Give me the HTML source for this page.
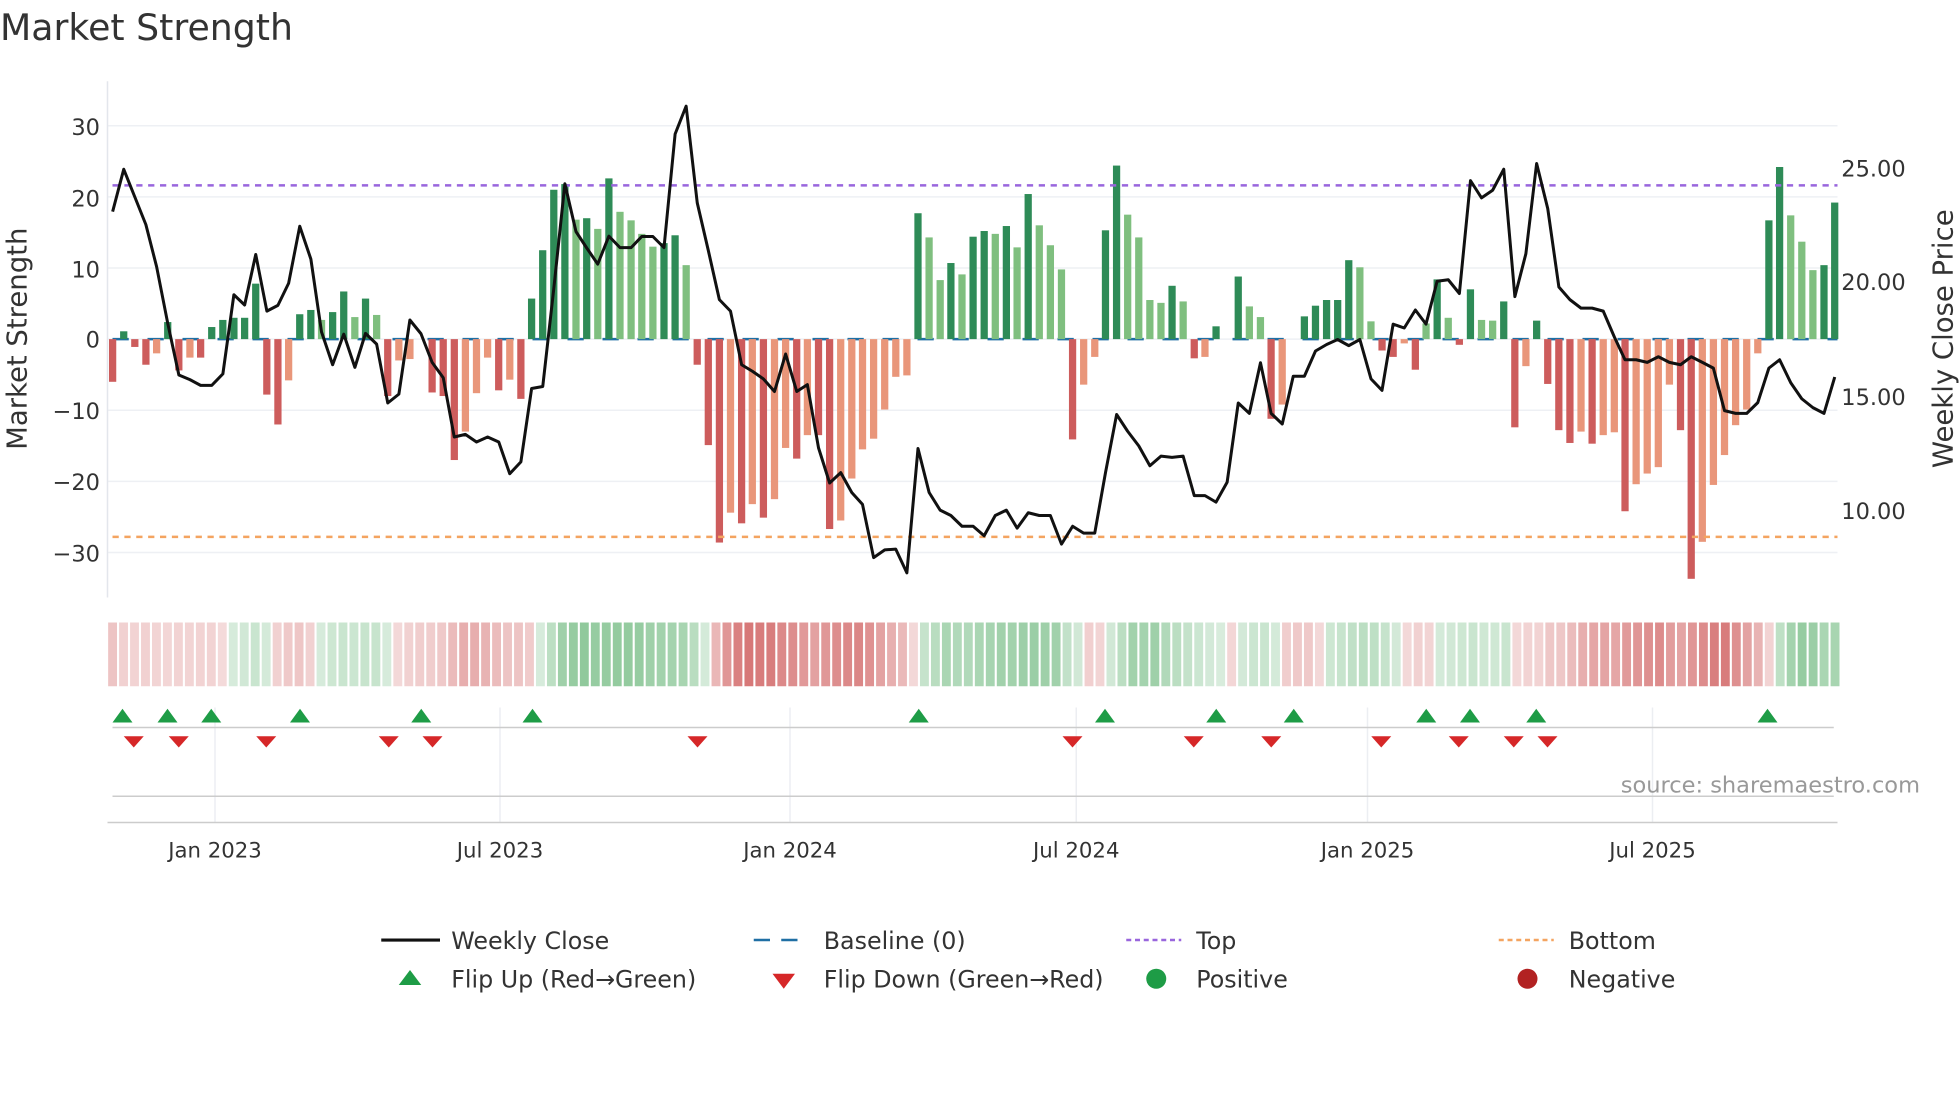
<!DOCTYPE html>
<html><head><meta charset="utf-8">
<style>
html,body{margin:0;padding:0;background:#fff;}
svg{display:block;font-family:"DejaVu Sans","Liberation Sans",sans-serif;}
</style></head>
<body>
<svg id="s" width="1960" height="1102" viewBox="0 0 1568 881.6" xmlns="http://www.w3.org/2000/svg">
<rect width="1568" height="882" fill="#fff"/>
<text x="0" y="32" font-size="29" fill="#333">Market Strength</text>
<g id="grid"></g>
<g id="bars"></g>
<g id="fg"></g>
<text transform="translate(21,271) rotate(-90)" text-anchor="middle" font-size="22" fill="#333">Market Strength</text>
<text transform="translate(1562,271) rotate(-90)" text-anchor="middle" font-size="22" fill="#333">Weekly Close Price</text>
<g font-size="18" fill="#333" text-anchor="end">
<text x="80" y="108">30</text><text x="80" y="165">20</text><text x="80" y="222">10</text><text x="80" y="278">0</text>
<text x="80" y="335">−10</text><text x="80" y="392">−20</text><text x="80" y="449">−30</text>
</g>
<g font-size="18" fill="#333">
<text x="1473" y="141">25.00</text><text x="1473" y="232">20.00</text><text x="1473" y="324">15.00</text><text x="1473" y="415">10.00</text>
</g>
<g font-size="17" fill="#333" text-anchor="middle">
<text x="172" y="686">Jan 2023</text><text x="400" y="686">Jul 2023</text><text x="632" y="686">Jan 2024</text>
<text x="861" y="686">Jul 2024</text><text x="1094" y="686">Jan 2025</text><text x="1322" y="686">Jul 2025</text>
</g>
<text x="1536" y="634" font-size="18" fill="#999" text-anchor="end">source: sharemaestro.com</text>
<g font-size="19" fill="#333">
<line x1="305" y1="752" x2="352" y2="752" stroke="#111" stroke-width="2.5"/>
<text x="361" y="759">Weekly Close</text>
<line x1="603" y1="752" x2="645" y2="752" stroke="#1f6fa4" stroke-width="2" stroke-dasharray="13,9"/>
<text x="659" y="759">Baseline (0)</text>
<line x1="901" y1="752" x2="945" y2="752" stroke="#9966dd" stroke-width="2" stroke-dasharray="4,3"/>
<text x="957" y="759">Top</text>
<line x1="1199" y1="752" x2="1243" y2="752" stroke="#f4a460" stroke-width="2" stroke-dasharray="4,3"/>
<text x="1255" y="759">Bottom</text>
<polygon points="319,788 337,788 328,776" fill="#1e9c46"/>
<text x="361" y="790">Flip Up (Red→Green)</text>
<polygon points="618,779 636,779 627,791" fill="#d62728"/>
<text x="659" y="790">Flip Down (Green→Red)</text>
<circle cx="925" cy="783" r="8" fill="#1e9c46"/>
<text x="957" y="790">Positive</text>
<circle cx="1222" cy="783" r="8" fill="#b22222"/>
<text x="1255" y="790">Negative</text>
</g>
</svg>
<script>
(function(){
var NS="http://www.w3.org/2000/svg";
function el(p,t,a){var e=document.createElementNS(NS,t);for(var k in a)e.setAttribute(k,a[k]);p.appendChild(e);return e;}
var grid=document.getElementById('grid'),bars=document.getElementById('bars'),fg=document.getElementById('fg');
[30,20,10,0,-10,-20,-30].forEach(function(v){var y=271.3-v*5.69;el(grid,'line',{x1:86,x2:1470,y1:y,y2:y,stroke:'#eef0f4','stroke-width':1.2});});
el(grid,'line',{x1:86,x2:86,y1:65,y2:478,stroke:'#e3e6ec','stroke-width':1.2});
[172,400,632,861,1094,1322].forEach(function(x){el(grid,'line',{x1:x,x2:x,y1:566,y2:658,stroke:'#eceef2','stroke-width':1.2});});
el(grid,'line',{x1:90,x2:1467,y1:582,y2:582,stroke:'#ccc','stroke-width':1.2});
el(grid,'line',{x1:90,x2:1467,y1:637,y2:637,stroke:'#ccc','stroke-width':1.2});
el(grid,'line',{x1:86,x2:1470,y1:658,y2:658,stroke:'#ccc','stroke-width':1.2});
var C={G:'#2e8b57',g:'#7fbf7f',R:'#cd5c5c',s:'#e9967a'};
var z1=[[33,-6,'R'],[62,1.1,'G'],[91,-1.1,'R'],[120,-3.6,'R'],[148,-2,'s'],[177,2.4,'G'],[206,-4.4,'R'],[235,-2.6,'s'],[263,-2.6,'R'],[292,1.7,'G'],[321,2.7,'G'],[350,3,'G'],[378,3,'G'],[407,7.8,'G'],[436,-7.8,'R'],[465,-12,'R'],[493,-5.8,'s'],[522,3.5,'G'],[551,4.1,'G'],[579,2.7,'g'],[608,3.8,'G'],[637,6.7,'G'],[666,3.1,'g'],[694,5.7,'G'],[723,3.4,'g'],[752,-8,'R'],[781,-3,'s'],[810,-2.8,'s'],[868,-7.5,'R'],[897,-8,'R'],[926,-17,'R'],[955,-13,'s'],[984,-7.6,'s'],[1013,-2.6,'s'],[1042,-7.2,'R'],[1071,-5.7,'s'],[1100,-8.4,'R'],[1128,5.7,'G'],[1157,12.5,'G'],[1186,21,'G'],[1215,21.8,'G'],[1244,16.8,'g'],[1272,17,'G'],[1301,15.5,'g'],[1330,22.6,'G'],[1359,17.9,'g'],[1388,16.7,'g'],[1416,14.8,'g'],[1445,13,'g'],[1474,13.5,'G'],[1503,14.6,'G'],[1532,10.4,'g']];
var z2=[[45,-3.6,'R'],[74,-14.9,'R'],[103,-28.6,'R'],[132,-24.4,'s'],[161,-25.9,'R'],[189,-23.2,'s'],[218,-25.1,'R'],[247,-22.5,'s'],[276,-15.3,'s'],[305,-16.8,'R'],[333,-13.5,'s'],[362,-13.5,'R'],[391,-26.7,'R'],[420,-25.5,'s'],[449,-19.6,'s'],[477,-15.5,'s'],[506,-14,'s'],[535,-9.9,'s'],[564,-5.3,'s'],[593,-5.1,'s'],[622,17.7,'G'],[651,14.3,'g'],[680,8.3,'g'],[708,10.7,'G'],[737,9.1,'g'],[766,14.4,'G'],[795,15.2,'G'],[824,14.8,'g'],[853,15.9,'G'],[881,12.9,'g'],[910,20.4,'G'],[939,16,'g'],[968,13.2,'g'],[997,9.8,'g'],[1026,-14.1,'R'],[1055,-6.4,'s'],[1084,-2.5,'s'],[1112,15.3,'G'],[1141,24.4,'G'],[1170,17.5,'g'],[1199,14.3,'g'],[1228,5.5,'g'],[1257,5.1,'g'],[1286,7.5,'G'],[1315,5.3,'g'],[1344,-2.7,'R'],[1372,-2.5,'s'],[1401,1.8,'G'],[1459,8.8,'G'],[1488,4.6,'g'],[1517,3.1,'g']];
var z3=[[29,-11.2,'R'],[58,-9.2,'s'],[116,3.2,'G'],[145,4.7,'G'],[174,5.5,'G'],[203,5.5,'G'],[232,11.1,'G'],[261,10.1,'g'],[290,2.5,'g'],[319,-1.6,'R'],[348,-2.5,'R'],[377,-0.6,'s'],[406,-4.3,'R'],[434,2.2,'g'],[463,8.4,'G'],[492,3,'g'],[521,-0.8,'R'],[550,7,'G'],[579,2.7,'g'],[608,2.6,'g'],[637,5.3,'G'],[666,-12.4,'R'],[695,-3.8,'s'],[723,2.6,'G'],[752,-6.3,'R'],[781,-12.8,'R'],[810,-14.6,'R'],[839,-13,'s'],[868,-14.7,'R'],[897,-13.5,'s'],[926,-13.1,'s'],[954,-24.2,'R'],[983,-20.4,'s'],[1012,-18.9,'s'],[1041,-18,'s'],[1070,-6.4,'s'],[1099,-12.8,'R'],[1127,-33.7,'R'],[1156,-28.5,'s'],[1185,-20.5,'s'],[1214,-16.3,'s'],[1243,-12.1,'s'],[1272,-9.9,'s'],[1301,-2,'s'],[1330,16.7,'G'],[1358,24.2,'G'],[1387,17.4,'g'],[1416,13.7,'g'],[1445,9.7,'g'],[1474,10.4,'G'],[1502,19.2,'G']];
var all=[];
function add(arr,off){arr.forEach(function(b){all.push([off+b[0]*0.3061,b[1],b[2]]);});}
add(z1,80);add(z2,544);add(z3,1008);
el(bars,'line',{x1:90,x2:1470,y1:271.3,y2:271.3,stroke:'#1f6fa4','stroke-width':2,'stroke-dasharray':'13,15'});
var vals=new Array(158).fill(0);
all.forEach(function(b){var x=b[0],v=b[1],h=Math.abs(v)*5.69;var y=v>0?271.3-h:271.3;
 el(bars,'rect',{x:x-2.9,y:y,width:5.8,height:Math.max(h,0.8),fill:C[b[2]]});
 var i=Math.round((x-90.1)/8.777);if(i>=0&&i<158)vals[i]=v;});
for(var i=0;i<158;i++){var s=0,n=0;for(var j=Math.max(0,i-3);j<=i;j++){s+=vals[j];n++;}var m=s/n;
 var a=Math.min(0.82,0.2+Math.abs(m)/30*0.62);
 var col=m>=0?'rgba(70,165,90,'+a.toFixed(2)+')':'rgba(200,70,70,'+a.toFixed(2)+')';
 el(bars,'rect',{x:90.1+i*8.777-3.6,y:498,width:7.1,height:51,fill:col});}
el(fg,'line',{x1:90,x2:1470,y1:148.3,y2:148.3,stroke:'#9966dd','stroke-width':2,'stroke-dasharray':'5,4.5'});
el(fg,'line',{x1:90,x2:1470,y1:429.5,y2:429.5,stroke:'#f4a460','stroke-width':2,'stroke-dasharray':'5,4.5'});
var p1=[[33,318],[62,207],[91,280],[120,352],[148,462],[177,610],[206,745],[235,757],[263,772],[292,772],[321,742],[350,535],[378,562],[407,430],[436,578],[465,563],[493,505],[522,356],[551,442],[579,632],[608,718],[637,638],[666,725],[694,636],[723,664],[752,818],[781,795],[810,601],[839,637],[868,712],[897,752],[926,907],[955,900],[984,920],[1013,907],[1042,920],[1071,1003],[1100,972],[1128,780],[1157,775],[1186,520],[1215,245],[1244,370],[1272,413],[1301,455],[1330,382],[1359,412],[1388,412],[1416,383],[1445,383],[1474,412],[1503,115],[1532,42]];
var p2=[[45,295],[74,420],[103,548],[132,578],[161,718],[189,735],[218,755],[247,788],[276,690],[305,788],[333,770],[362,935],[391,1027],[420,1000],[449,1052],[477,1083],[506,1222],[535,1202],[564,1200],[593,1262],[622,937],[651,1052],[680,1098],[708,1112],[737,1140],[766,1140],[795,1165],[824,1112],[853,1098],[881,1145],[910,1105],[939,1112],[968,1112],[997,1187],[1026,1140],[1055,1158],[1084,1158],[1112,1000],[1141,848],[1170,892],[1199,930],[1228,982],[1257,957],[1286,960],[1315,957],[1344,1060],[1372,1060],[1401,1077],[1430,1025],[1459,818],[1488,845],[1517,713]];
var p3=[[29,845],[58,873],[87,748],[116,748],[145,682],[174,665],[203,652],[232,668],[261,652],[290,755],[319,785],[348,612],[377,622],[406,575],[434,612],[463,500],[492,496],[521,532],[550,237],[579,282],[608,262],[637,207],[666,540],[695,428],[723,192],[752,310],[781,515],[810,548],[839,570],[868,570],[897,578],[926,645],[954,705],[983,705],[1012,712],[1041,697],[1070,712],[1099,718],[1127,697],[1156,712],[1185,727],[1214,838],[1243,845],[1272,845],[1301,817],[1330,727],[1358,705],[1387,765],[1416,807],[1445,830],[1474,845],[1502,750]];
var pts=[];
function ap(arr,off){arr.forEach(function(p){pts.push((off+p[0]*0.3061).toFixed(1)+','+(72+p[1]*0.3061).toFixed(1));});}
ap(p1,80);ap(p2,544);ap(p3,1008);
el(fg,'polyline',{points:pts.join(' '),fill:'none',stroke:'#111','stroke-width':2.4,'stroke-linejoin':'round'});
[98,134,169,240,337,426,735,884,973,1035,1141,1176,1229,1414].forEach(function(x){el(fg,'polygon',{points:(x-8)+',578 '+(x+8)+',578 '+x+',567',fill:'#1e9c46'});});
[107,143,213,311,346,558,858,955,1017,1105,1167,1211,1238].forEach(function(x){el(fg,'polygon',{points:(x-8)+',589 '+(x+8)+',589 '+x+',598',fill:'#d62728'});});
})();
</script>
</body></html>
